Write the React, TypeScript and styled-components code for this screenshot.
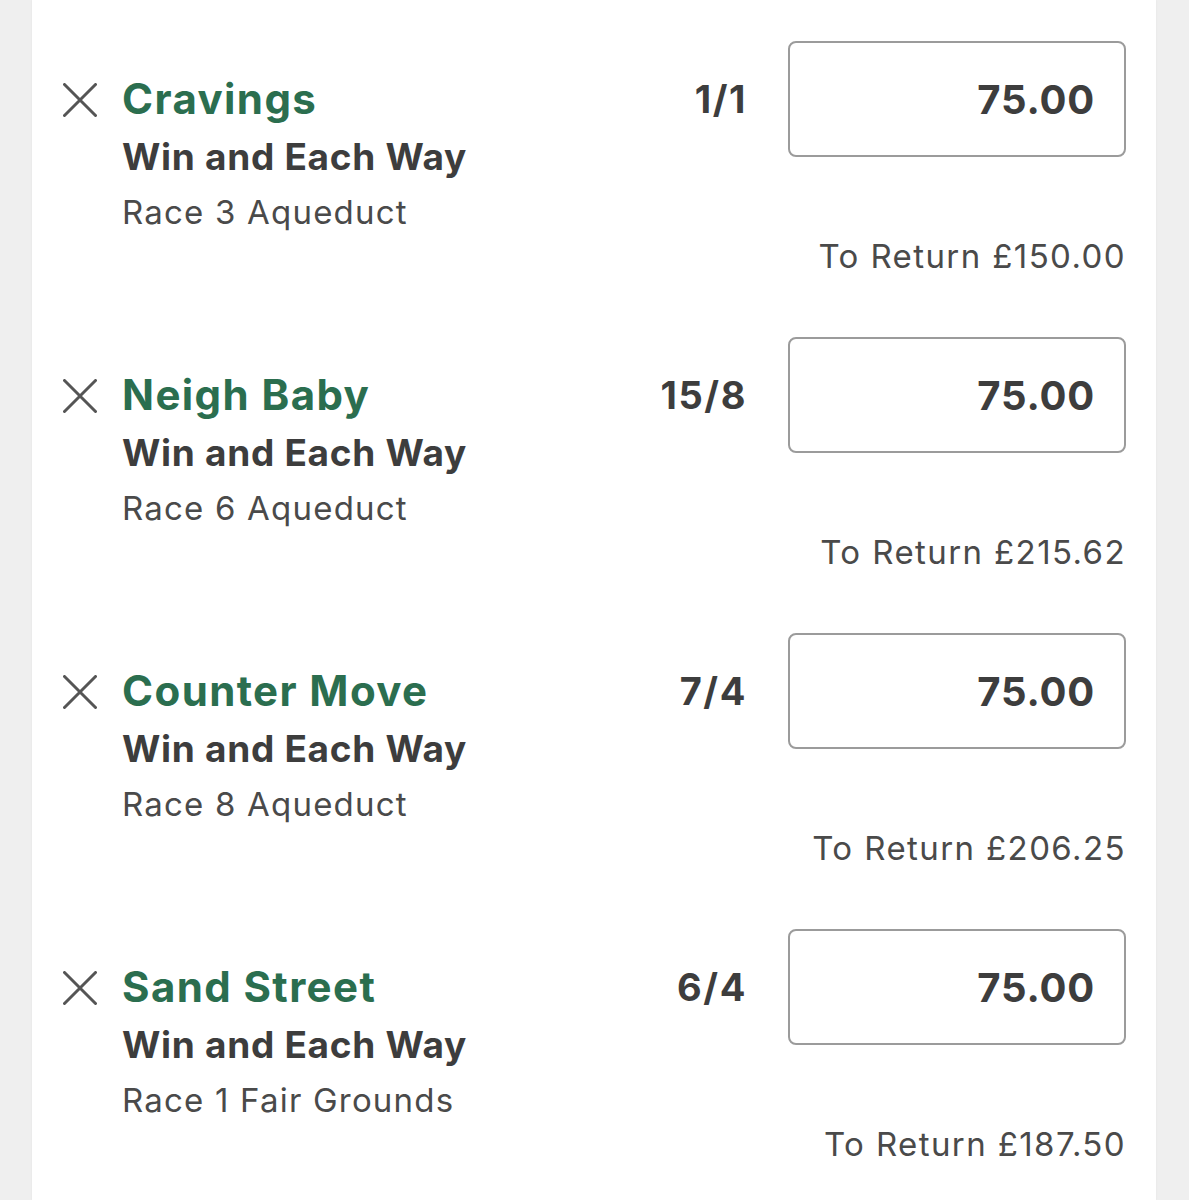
import React from "react";
import styled, { createGlobalStyle } from "styled-components";

const Global = createGlobalStyle`
  html, body { margin: 0; padding: 0; background: #efefef; }
  body { font-family: Inter, "Noto Sans", "Liberation Sans", sans-serif; -webkit-font-smoothing: antialiased; }
`;

const Page = styled.div`
  display: flex;
  justify-content: center;
  padding: 0 33px 0 32px;
  min-height: 1200px;
  background: #efefef;
`;

const Card = styled.div`
  flex: 1;
  background: #ffffff;
  padding: 0 30px 0 31px;
  box-shadow: 0 0 2px rgba(0, 0, 0, 0.06);
`;

const Row = styled.div`
  display: flex;
  flex-direction: column;
  padding: 41px 0 18px;
`;

const Top = styled.div`
  display: grid;
  grid-template-columns: 59px 1fr auto 338px;
  align-items: start;
`;

const Cross = styled.div`
  padding-top: 42px;
  width: 34px;
  height: 34px;
  color: #555555;
`;

const Info = styled.div`
  display: flex;
  flex-direction: column;
  padding-top: 33px;
`;

const Name = styled.div`
  color: #2b6e4f;
  font-weight: 700;
  font-size: 42px;
  line-height: 50px;
  letter-spacing: 1.4px;
`;

const Market = styled.div`
  color: #3d3d3d;
  font-weight: 700;
  font-size: 37px;
  line-height: 66px;
  letter-spacing: 0.7px;
`;

const Event = styled.div`
  color: #4a4a4a;
  font-weight: 400;
  font-size: 33px;
  line-height: 44px;
  letter-spacing: 1.2px;
`;

const Odds = styled.div`
  color: #3d3d3d;
  font-weight: 700;
  font-size: 38px;
  line-height: 116px;
  margin-right: 41px;
  letter-spacing: 1.6px;
  text-align: right;
`;

const Stake = styled.div`
  box-sizing: border-box;
  height: 116px;
  border: 2px solid #9b9b9b;
  border-radius: 8px;
  display: flex;
  align-items: center;
  justify-content: flex-end;
  padding-right: 29px;
  color: #3d3d3d;
  font-weight: 700;
  font-size: 40px;
  letter-spacing: 0.8px;
`;

const Return = styled.div`
  text-align: right;
  color: #4a4a4a;
  font-size: 33px;
  line-height: 44px;
  letter-spacing: 1.4px;
`;

const CrossIcon = () => (
  <svg width="34" height="34" viewBox="0 0 34 34" fill="none">
    <path d="M1.5 1.5 L32.5 32.5 M32.5 1.5 L1.5 32.5" stroke="currentColor" strokeWidth="3" strokeLinecap="round" />
  </svg>
);

const bets = [
  { name: "Cravings", odds: "1/1", event: "Race 3 Aqueduct", ret: "£150.00" },
  { name: "Neigh Baby", odds: "15/8", event: "Race 6 Aqueduct", ret: "£215.62" },
  { name: "Counter Move", odds: "7/4", event: "Race 8 Aqueduct", ret: "£206.25" },
  { name: "Sand Street", odds: "6/4", event: "Race 1 Fair Grounds", ret: "£187.50" },
];

export default function App() {
  return (
    <>
      <Global />
      <Page>
        <Card>
          {bets.map((b) => (
            <Row key={b.name}>
              <Top>
                <Cross>
                  <CrossIcon />
                </Cross>
                <Info>
                  <Name>{b.name}</Name>
                  <Market>Win and Each Way</Market>
                  <Event>{b.event}</Event>
                </Info>
                <Odds>{b.odds}</Odds>
                <Stake>75.00</Stake>
              </Top>
              <Return>To Return {b.ret}</Return>
            </Row>
          ))}
        </Card>
      </Page>
    </>
  );
}
